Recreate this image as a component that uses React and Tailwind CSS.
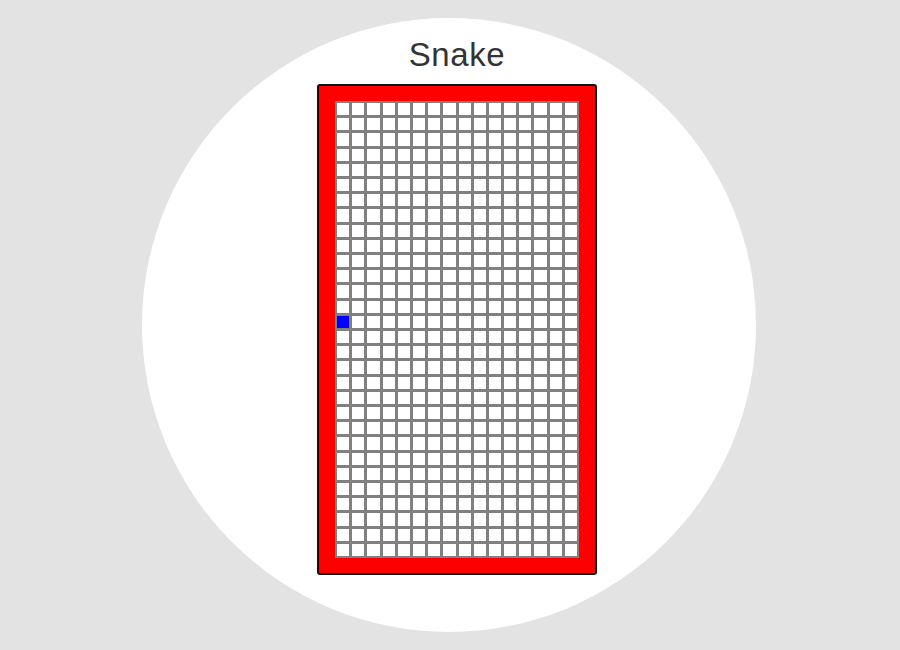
import React from "react";

const COLS = 16;
const ROWS = 30;

export default function App() {
  const cells = [];
  for (let r = 0; r < ROWS; r++) {
    for (let c = 0; c < COLS; c++) {
      const snake = r === 14 && c === 0;
      cells.push(
        <div
          key={`${r}-${c}`}
          className={
            snake
              ? "bg-[#0000ff] border border-[#808080]"
              : "bg-white border border-[#808080]"
          }
        />
      );
    }
  }
  return (
    <div className="w-[900px] h-[650px] bg-[#e3e3e3] flex items-center justify-center overflow-hidden">
      <div className="w-[614px] h-[614px] rounded-full bg-white flex flex-col items-center pt-[18px] pl-[16px] -ml-[2px]">
        <h1 className="text-[33px] leading-[37px] text-[#333333] font-['Liberation_Sans',Arial,sans-serif] tracking-[0.6px]">
          Snake
        </h1>
        <div className="mt-[11px] border-2 border-[#111111] rounded-[3px] bg-[#ff0000] px-[16px] py-[15px]">
          <div className="w-[244px] h-[457px] bg-[#808080] p-[1px] grid grid-cols-16 grid-rows-[repeat(30,minmax(0,1fr))] gap-[1px]">
            {cells}
          </div>
        </div>
      </div>
    </div>
  );
}
